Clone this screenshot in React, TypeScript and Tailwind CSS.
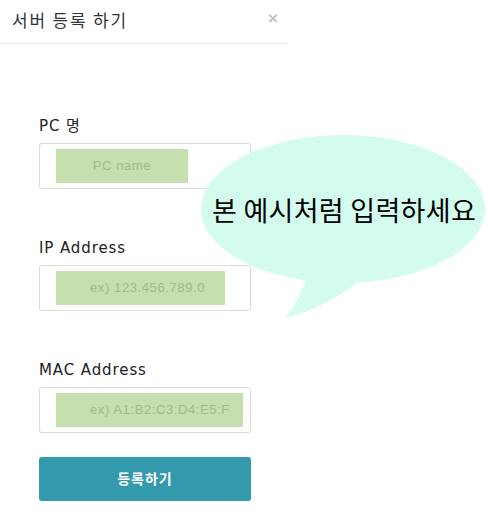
const font = {
  fontFamily: '"Liberation Sans", "Noto Sans CJK KR", sans-serif',
};

const labelFont = {
  fontFamily: '"DejaVu Sans", "Noto Sans CJK KR", sans-serif',
};

function Field({ label, placeholder, boxWidth, first }: { label: string; placeholder: string; boxWidth: string; first?: boolean }) {
  return (
    <div className={first ? "" : "mt-[47px]"}>
      <div className="pt-[2px] text-[15px] leading-[20px] tracking-[0.9px] text-[#222]" style={labelFont}>
        {label}
      </div>
      <div className="mt-[7px] h-[46px] w-[212px] rounded-[3px] border border-[#dcdcdc] bg-white pl-[16px] pt-[5px]">
        <div className={`flex h-[34px] items-center bg-[#c6dfae] pl-[34px] text-[13px] tracking-[0.6px] text-[#a2b98e] ${boxWidth}`}>
          {placeholder}
        </div>
      </div>
    </div>
  );
}

export default function App() {
  return (
    <div className="relative h-[520px] w-[488px] overflow-hidden bg-white" style={font}>
      <div className="flex h-[44px] w-[288px] items-center justify-between border-b border-[#e5e5e5] pb-[3px] pl-[12px] pr-[10px]">
        <span className="text-[17px] tracking-[1.8px] text-[#333]" style={{ fontFamily: '"Noto Sans CJK KR", sans-serif' }}>
          서버 등록 하기
        </span>
        <span className="-mt-[3px] text-[17px] font-bold leading-none text-[#c2c2c2]">×</span>
      </div>

      <div className="pl-[39px] pt-[70px]">
        <Field first label="PC 명" placeholder="PC name" boxWidth="w-[132px] justify-center !pl-0" />
        <Field label="IP Address" placeholder="ex) 123.456.789.0" boxWidth="w-[169px]" />
        <Field label="MAC Address" placeholder="ex) A1:B2:C3:D4:E5:F" boxWidth="w-[187px]" />
        <button className="mt-[24px] flex h-[44px] w-[212px] items-center justify-center rounded-[3px] bg-[#3399ad] text-[14px] font-bold tracking-[1px] text-white">
          등록하기
        </button>
      </div>

      <div className="absolute left-[200px] top-[133px] h-[190px] w-[288px]">
        <svg width="288" height="190" viewBox="0 0 288 190" className="absolute left-0 top-0">
          <ellipse cx="143" cy="76" rx="142" ry="74" fill="#d4fcee" />
          <path d="M108 140 Q100 168 85 185 Q125 175 160 148 Z" fill="#d4fcee" />
        </svg>
        <div
          className="absolute left-0 top-[59px] w-[288px] text-center text-[27px] leading-[36px] tracking-[0.3px] text-black"
          style={{ fontFamily: '"Noto Sans CJK KR", sans-serif' }}
        >
          본 예시처럼 입력하세요
        </div>
      </div>
    </div>
  );
}
